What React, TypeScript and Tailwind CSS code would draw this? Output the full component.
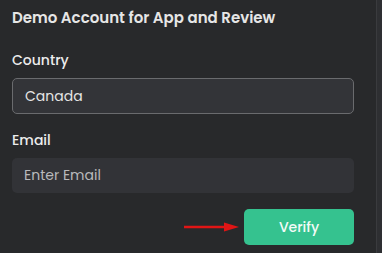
export default function App() {
    return (
        <div className="flex h-[253px] w-[382px] bg-[#28292b] font-['Poppins','Open_Sans',sans-serif] text-[#e8e8e8]">
            <div className="flex-1 pl-3 pr-[22px] pt-[7px]">
                <h2 className="text-[15px] font-semibold leading-[22px] text-[#e6e6e6]">
                    Demo Account for App and Review
                </h2>

                <div className="mt-[21px]">
                    <label className="block text-[14px] font-medium leading-[20px] text-[#ececec]">Country</label>
                    <div className="mt-[8px] flex h-[36px] items-center rounded-[5px] border border-[#6a6b6e] bg-[#333438] px-3 text-[14px] text-[#e4e4e4]">
                        Canada
                    </div>
                </div>

                <div className="mt-[16px]">
                    <label className="block text-[14px] font-medium leading-[20px] text-[#ececec]">Email</label>
                    <input
                        type="text"
                        placeholder="Enter Email"
                        className="mt-[8px] block h-[35px] w-full rounded-[5px] bg-[#323337] px-3 text-[14px] text-[#e4e4e4] outline-none placeholder:text-[#b9babc]"
                    />
                </div>

                <div className="mt-[16px] flex items-center justify-end gap-[4px]">
                    <svg width="56" height="10" viewBox="0 0 56 10">
                        <line x1="0" y1="5" x2="42" y2="5" stroke="#e01515" strokeWidth="2.5" />
                        <polygon points="40,0.5 55,5 40,9.5" fill="#e01515" />
                    </svg>
                    <button className="h-[36px] w-[110px] rounded-[5px] bg-[#35c28f] text-[14px] font-medium text-[#f3fbf7]">
                        Verify
                    </button>
                </div>
            </div>
            <div className="w-[6px] border-l border-[#3a3b3e] bg-[#2e2f32]" />
        </div>
    )
}
